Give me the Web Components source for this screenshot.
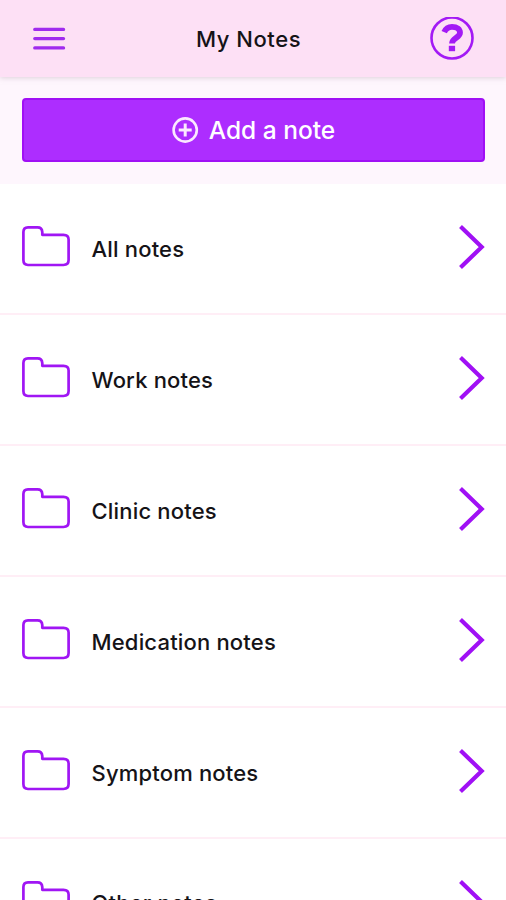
<!DOCTYPE html>
<html lang="en"><head><meta charset="utf-8"><title>My Notes</title>
<style>
html,body{margin:0;height:900px;overflow:hidden;background:#fff}
body{font-family:Inter,"Liberation Sans",sans-serif;color:#151317}
</style></head><body>
<notes-app></notes-app>
<script>
const define = (name, html) => {
  const t = document.createElement('template');
  t.innerHTML = html;
  customElements.define(name, class extends HTMLElement {
    constructor() {
      super();
      this.attachShadow({mode: 'open'}).append(t.content.cloneNode(true));
    }
  });
};
define('app-header', `<style>
:host{display:flex;box-sizing:border-box;height:77px;align-items:center;justify-content:space-between;padding:0 32px 0 31px;background:#fde0f5;box-shadow:0 1px 5px #bfaebb80;position:relative}
svg{display:block}
h1{margin:1px 0 0;font-size:22px;line-height:30px;font-weight:450;letter-spacing:.55px;white-space:nowrap}
</style>
<svg width="36" height="26" viewBox="0 0 36 26" fill="none" stroke="#a02bee" stroke-width="3.4" stroke-linecap="round"><path d="M3.8 3.4H32.5M3.8 12.6H32.5M3.8 21.9H32.5"/></svg>
<h1><slot></slot></h1>
<svg width="44" height="44" viewBox="0 0 44 44" fill="none" stroke="#a31af5"><circle cx="22" cy="21" r="20.5" stroke-width="2.6"/><path d="M14.2 15.1C16 10.9 19 9.8 22 9.8C27.2 9.8 30 12.4 30 15.8C30 20.9 22 20.6 22 26.6" stroke-width="5.8"/><path d="M18.8 28.8h6.3v5.4h-6.3z" fill="#a31af5" stroke="none"/></svg>`);
define('add-button', `<style>
:host{display:block;padding:21px 21px 22px 22px;background:#fef6fd}
button{box-sizing:border-box;width:100%;height:64px;display:flex;align-items:center;justify-content:center;gap:10px;padding:0;border:2px solid #a00ff5;border-radius:4px;background:#ad2dff;color:#fff;font:500 24.5px/32px Inter,"Liberation Sans",sans-serif}
svg{display:block}
</style><button><svg width="27" height="27" viewBox="0 0 27 27" fill="none" stroke="#fbe9ff" stroke-width="2.6"><circle cx="13.2" cy="13" r="11.6"/><path d="M13.2 6.5v13M6.7 13h13" stroke-width="3"/></svg><span><slot></slot></span></button>`);
define('note-row', `<style>
:host{display:flex;box-sizing:border-box;height:131px;padding:0 20px 3px 20px;align-items:center;border-bottom:2px solid #ffeef6}
svg{display:block;flex:none}
span{flex:1;margin:4px 0 0 19.5px;font-size:22px;line-height:30px;font-weight:500;letter-spacing:.18px;white-space:nowrap}
:host(:last-child) span{margin-top:2px}
</style>
<svg width="52" height="44" viewBox="0 0 52 44" fill="none" stroke="#a016f4" stroke-width="2.7" stroke-linejoin="round"><path d="M8 2.4H17.5Q22 2.4 22.3 7.1V9.8H43.5Q48.6 9.8 48.6 14.6V35.1Q48.6 40 43.5 40H8Q3.4 40 3.4 35.1V7.1Q3.4 2.4 8 2.4Z"/></svg>
<span><slot></slot></span>
<svg width="30" height="48" viewBox="0 0 30 48" fill="none" stroke="#a010f5" stroke-width="4.2"><path d="M4.5 3.5L25.7 24L4.5 44.5"/></svg>`);
define('notes-app', `<style>:host{display:block;height:900px;overflow:hidden}</style>
<app-header>My Notes</app-header><add-button>Add a note</add-button>
<main><note-row>All notes</note-row><note-row>Work notes</note-row><note-row>Clinic notes</note-row><note-row>Medication notes</note-row><note-row>Symptom notes</note-row><note-row>Other notes</note-row></main>`);
</script></body></html>
